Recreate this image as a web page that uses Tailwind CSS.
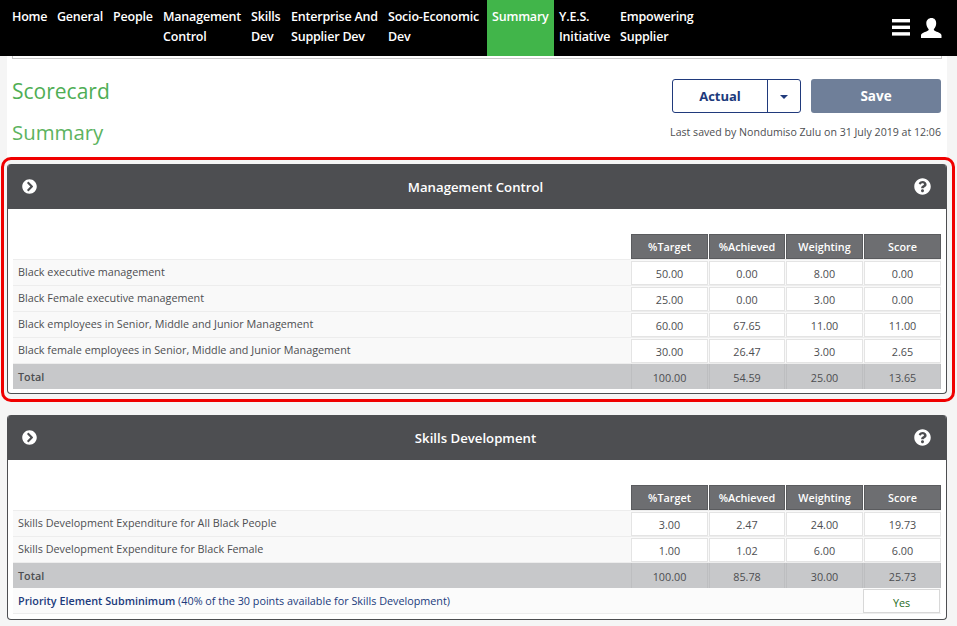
<!DOCTYPE html>
<html lang="en">
<head>
    <meta charset="UTF-8">
    <title>Scorecard Summary</title>
    <script src="https://cdn.jsdelivr.net/npm/@tailwindcss/browser@4"></script>
</head>
<body class="bg-[#f5f5f5] h-[626px] overflow-hidden relative font-['Open_Sans','Noto_Sans',sans-serif] text-[#4d4e51]">
    <!-- Nav -->
    <nav class="bg-black h-[56px] flex pl-[7px] pr-[15px] text-white text-[12.5px] leading-[20px] font-semibold tracking-[-0.2px]">
        <a class="w-[45px] pl-[5px] pt-[7px]">Home</a>
        <a class="w-[56px] pl-[5px] pt-[7px]">General</a>
        <a class="w-[50px] pl-[5px] pt-[7px]">People</a>
        <a class="w-[88px] pl-[5px] pt-[7px]">Management Control</a>
        <a class="w-[40px] pl-[5px] pt-[7px]">Skills Dev</a>
        <a class="w-[97px] pl-[5px] pt-[7px]">Enterprise And Supplier Dev</a>
        <a class="w-[104px] pl-[5px] pt-[7px] pr-[6px]">Socio-Economic Dev</a>
        <a class="w-[67px] pl-[5px] pt-[7px] bg-[#41b54a]">Summary</a>
        <a class="w-[65px] pl-[5px] pt-[7px]">Y.E.S. Initiative</a>
        <a class="w-[90px] pl-[1px] pt-[7px]">Empowering Supplier</a>
        <div class="ml-auto flex items-center gap-[11px] pb-[1px]">
            <svg class="w-[18px] h-[17px]" viewBox="0 0 18 17" fill="#fff"><rect width="18" height="3.4" y="0"/><rect width="18" height="3.4" y="6.6"/><rect width="18" height="3.4" y="13.2"/></svg>
            <svg class="w-[21px] h-[20px]" viewBox="0 0 21 20" fill="#fff"><path d="M10.5 0c3 0 4.7 2.2 4.7 5.2 0 2.4-1 4.600-2.400 6 .1 1 .6 1.500 1.800 2 2.700 1 5.900 2 5.900 4.200V20H0v-2.600c0-2.200 3.200-3.200 5.900-4.200 1.200-.5 1.700-1 1.800-2-1.400-1.400-2.400-3.600-2.400-6C5.300 2.200 7.500 0 10.500 0z"/></svg>
        </div>
    </nav>

    <main class="ml-[7px] mr-[10px] bg-white h-[101px] px-[5px]">
        <div class="border border-t-0 border-[#c8c8c8] h-[3px]"></div>
        <div class="flex justify-between">
            <div>
                <h1 class="text-[21px] leading-[30px] font-medium text-[#4fae55] mt-[17px]">Scorecard</h1>
                <h2 class="text-[20.4px] leading-[30px] text-[#5cb360] mt-[11px]">Summary</h2>
            </div>
            <div class="flex flex-col items-end mr-[1px]">
                <div class="flex mt-[20px] gap-[10px]">
                    <div class="flex h-[34px] w-[129px] border border-[#203a7c] rounded-[3px] text-[#203a7c] text-[13px] font-bold">
                        <span class="w-[95px] pt-[1px] flex items-center justify-center border-r border-[#203a7c]">Actual</span>
                        <span class="flex-1 pt-[1px] flex items-center justify-center"><span class="border-x-[4px] border-x-transparent border-t-[4px] border-t-[#203a7c]"></span></span>
                    </div>
                    <button class="w-[130px] h-[34px] rounded-[3px] bg-[#6f7f99] text-white text-[13.5px] font-bold">Save</button>
                </div>
                <p class="text-[10.6px] leading-[16px] mt-[11px] text-[#4d4e51]">Last saved by Nondumiso Zulu on 31 July 2019 at 12:06</p>
            </div>
        </div>
    </main>

    <div id="panels"></div>

    <!-- highlight drawn on the screenshot -->
    <div class="absolute left-[1px] top-[157px] w-[954px] h-[245px] border-[3px] border-[#f00000] rounded-[10px] pointer-events-none"></div>

    <script>
        const chevron = '<svg class="w-[15px] h-[15px]" viewBox="0 0 512 512" fill="#fff"><path d="M256 8c137 0 248 111 248 248S393 504 256 504 8 393 8 256 119 8 256 8zm113.900 231L234.400 103.500c-9.400-9.400-24.600-9.400-33.900 0l-17 17c-9.400 9.400-9.400 24.600 0 33.900L285.100 256 183.500 357.600c-9.400 9.400-9.400 24.600 0 33.900l17 17c9.400 9.400 24.600 9.400 33.900 0L369.900 273c9.400-9.400 9.400-24.600 0-34z"/></svg>';
        const help = '<svg class="w-[17px] h-[17px]" viewBox="0 0 512 512" fill="#fff"><path d="M504 256c0 136.997-111.043 248-248 248S8 392.997 8 256C8 119.083 119.043 8 256 8s248 111.083 248 248zM262.655 90c-54.497 0-89.255 22.957-116.549 63.758-3.536 5.286-2.353 12.415 2.715 16.258l34.699 26.31c5.205 3.947 12.621 3.008 16.665-2.122 17.864-22.658 30.113-35.797 57.303-35.797 20.429 0 45.698 13.148 45.698 32.958 0 14.976-12.363 22.667-32.534 33.976C247.128 238.528 216 254.941 216 296v4c0 6.627 5.373 12 12 12h56c6.627 0 12-5.373 12-12v-1.333c0-28.462 83.186-29.647 83.186-106.667 0-58.002-60.165-102-116.531-102zM256 338c-25.365 0-46 20.635-46 46 0 25.364 20.635 46 46 46s46-20.636 46-46c0-25.365-20.635-46-46-46z"/></svg>';

        const panels = [
            {
                title: 'Management Control', box: 'mt-[7px] h-[230px]',
                rows: [
                    ['Black executive management', '50.00', '0.00', '8.00', '0.00'],
                    ['Black Female executive management', '25.00', '0.00', '3.00', '0.00'],
                    ['Black employees in Senior, Middle and Junior Management', '60.00', '67.65', '11.00', '11.00'],
                    ['Black female employees in Senior, Middle and Junior Management', '30.00', '26.47', '3.00', '2.65']
                ],
                total: ['100.00', '54.59', '25.00', '13.65']
            },
            {
                title: 'Skills Development', box: 'mt-[21px] h-[205px]',
                rows: [
                    ['Skills Development Expenditure for All Black People', '3.00', '2.47', '24.00', '19.73'],
                    ['Skills Development Expenditure for Black Female', '1.00', '1.02', '6.00', '6.00']
                ],
                total: ['100.00', '85.78', '30.00', '25.73'],
                priority: true
            }
        ];

        const widths = ['w-[77px] mr-[1px]', 'w-[76px] mr-[1px]', 'w-[77px] mr-[1px]', 'w-[77px]'];

        function renderPanel(p) {
            const head = ['%Target', '%Achieved', 'Weighting', 'Score'].map((h, i) =>
                `<span class="${widths[i]} bg-[#6d6e71] border border-[#5a5b5e]">${h}</span>`).join('');
            const rows = p.rows.map((r, n) => `
                <div class="flex ${n === 0 ? 'h-[27px] border-t' : 'h-[26px]'} bg-[#f9f9f9] border-b border-[#ededed] items-center">
                    <span class="flex-1 pl-[5px] pb-[1px]">${r[0]}</span>
                    ${r.slice(1).map((v, i) => `<span class="${widths[i]} h-[24px] leading-[23px] bg-white border border-[#e4e4e4] text-center">${v}</span>`).join('')}
                </div>`).join('');
            const total = p.total.map((v, i) =>
                `<span class="${widths[i]} h-[25px] pt-[1px] leading-[25px] text-center border-x border-[#bdbec0]">${v}</span>`).join('');
            const priority = p.priority ? `
                <div class="flex h-[26px] bg-[#fbfbfb] border-b border-[#ededed] items-center">
                    <span class="flex-1 pl-[5px] pt-[1px] text-[#203a7c]"><b class="font-semibold">Priority Element Subminimum</b> (40% of the 30 points available for Skills Development)</span>
                    <span class="w-[77px] mr-[1px] h-[24px] pt-[1px] leading-[23px] bg-white border border-[#d8d8d8] text-center text-[#1f6b24]">Yes</span>
                </div>` : '';
            return `
            <section class="ml-[7px] mr-[10px] ${p.box} bg-white border border-[#4d4e51] border-t-0 rounded-[4px] overflow-hidden">
                <header class="bg-[#4d4e51] h-[45px] flex items-center justify-between pl-[14px] pr-[15px] text-white text-[13.2px] font-semibold">
                    ${chevron}<span class="pt-[2px]">${p.title}</span>${help}
                </header>
                <div class="px-[5px] pt-[25px] text-[10.8px]">
                    <div class="flex justify-end h-[25px] text-white font-semibold text-center leading-[23px]">${head}</div>
                    ${rows}
                    <div class="flex h-[25px] bg-[#c7c8ca] items-center">
                        <span class="flex-1 pl-[5px] pt-[1px] font-semibold">Total</span>${total}
                    </div>
                    ${priority}
                </div>
            </section>`;
        }

        document.getElementById('panels').innerHTML = panels.map(renderPanel).join('');
    </script>
</body>
</html>
